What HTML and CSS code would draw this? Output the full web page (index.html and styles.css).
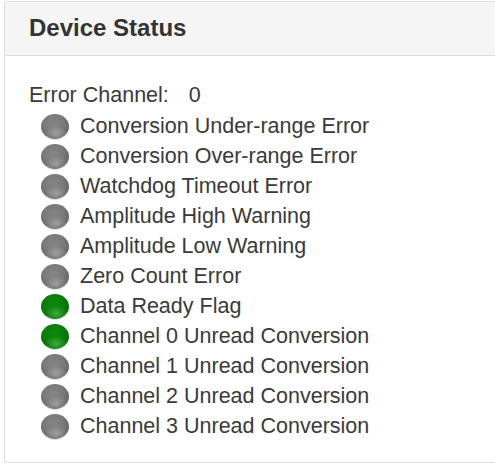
FILE: index.html
```html
<!DOCTYPE html>
<html>
<head>
<meta charset="utf-8">
<link rel="stylesheet" href="styles.css">
</head>
<body>
<div class="panel">
  <div class="panel-heading">Device Status</div>
  <div class="panel-body">
    <div class="error-line">Error Channel:<span class="error-val">0</span></div>
    <ul class="status-list">
      <li><span class="led"></span>Conversion Under-range Error</li>
      <li><span class="led"></span>Conversion Over-range Error</li>
      <li><span class="led"></span>Watchdog Timeout Error</li>
      <li><span class="led"></span>Amplitude High Warning</li>
      <li><span class="led"></span>Amplitude Low Warning</li>
      <li><span class="led"></span>Zero Count Error</li>
      <li><span class="led on"></span>Data Ready Flag</li>
      <li><span class="led on"></span>Channel 0 Unread Conversion</li>
      <li><span class="led"></span>Channel 1 Unread Conversion</li>
      <li><span class="led"></span>Channel 2 Unread Conversion</li>
      <li><span class="led"></span>Channel 3 Unread Conversion</li>
    </ul>
  </div>
</div>
</body>
</html>
```

FILE: styles.css
```css
html, body {
  margin: 0;
  padding: 0;
  background: #ffffff;
}

body {
  font-family: "Liberation Sans", Arial, sans-serif;
  color: #333333;
  overflow: hidden;
}

.panel {
  margin: 1px 0 0 4px;
  height: 462px;
  box-sizing: border-box;
  border: 1px solid #dddddd;
  border-right: none;
  border-radius: 4px 0 0 4px;
  overflow: hidden;
}

.panel-heading {
  background: #f5f5f5;
  border-bottom: 1px solid #dddddd;
  padding: 12px 24px 14px 24px;
  font-size: 24px;
  line-height: 27px;
  font-weight: bold;
  color: #333333;
}

.panel-body {
  padding: 24px 24px 20px 24px;
  font-size: 21.5px;
  line-height: 30px;
  color: #3a3a3a;
}

.error-line {
  height: 30px;
  margin-bottom: 1px;
}

.error-val {
  margin-left: 20px;
}

.status-list {
  list-style: none;
  margin: 0;
  padding: 0 0 0 12px;
}

.status-list li {
  display: flex;
  align-items: center;
  height: 30px;
}

.led {
  flex: 0 0 auto;
  width: 28px;
  height: 25px;
  margin-right: 11px;
  border-radius: 50%;
  background:
    radial-gradient(ellipse 60% 45% at 55% 80%, rgba(255,255,255,0.28), rgba(255,255,255,0) 70%),
    radial-gradient(circle at 45% 40%, #858585 0%, #7a7a7a 45%, #5e5e5e 85%, #4a4a4a 100%);
  box-shadow: 0 1px 1px rgba(0,0,0,0.15);
}

.led.on {
  background:
    radial-gradient(ellipse 60% 45% at 55% 80%, rgba(160,255,160,0.35), rgba(160,255,160,0) 70%),
    radial-gradient(circle at 45% 40%, #0f8a0f 0%, #0a7d0a 45%, #066306 85%, #044e04 100%);
}
```
